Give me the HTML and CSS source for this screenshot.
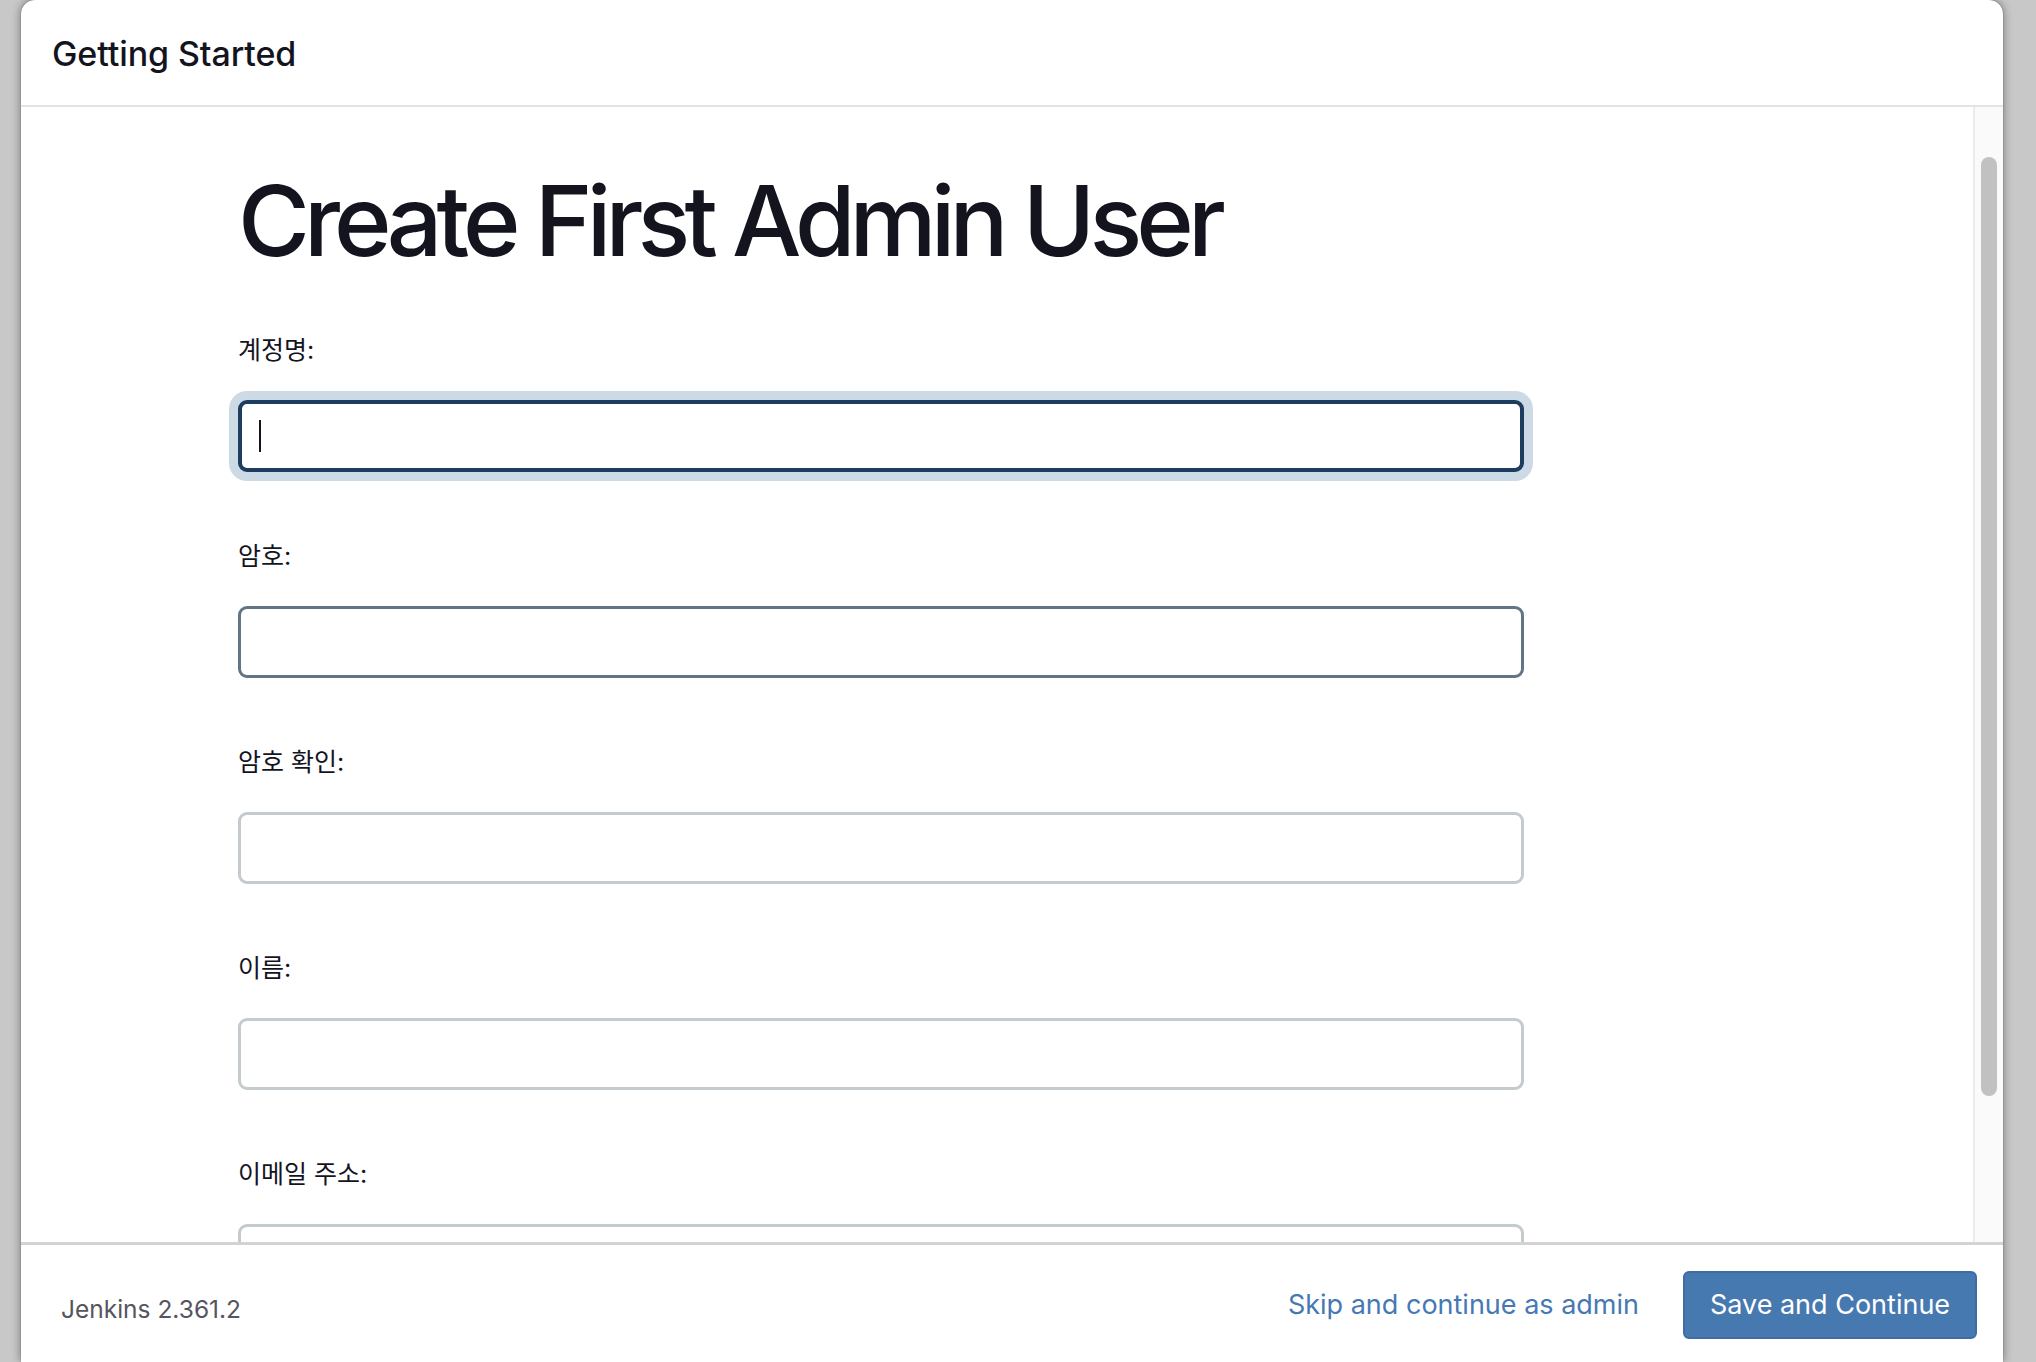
FILE: index.html
```html
<!DOCTYPE html>
<html lang="ko">
<head>
<meta charset="utf-8">
<title>Getting Started</title>
<link rel="stylesheet" href="styles.css">
</head>
<body>
<div class="page">
  <div class="panel">
    <div class="panel-header">
      <h4 class="header-title">Getting Started</h4>
    </div>
    <div class="panel-body">
      <div class="content">
        <h1 class="title">Create First Admin User</h1>
        <div class="field">
          <label class="label">계정명:</label>
          <div class="input input-focus"><span class="caret"></span></div>
        </div>
        <div class="field">
          <label class="label">암호:</label>
          <div class="input input-hover"></div>
        </div>
        <div class="field">
          <label class="label">암호 확인:</label>
          <div class="input"></div>
        </div>
        <div class="field">
          <label class="label">이름:</label>
          <div class="input"></div>
        </div>
        <div class="field">
          <label class="label">이메일 주소:</label>
          <div class="input"></div>
        </div>
      </div>
      <div class="scroll-track"><div class="scroll-thumb"></div></div>
    </div>
    <div class="panel-footer">
      <span class="version">Jenkins 2.361.2</span>
      <div class="actions">
        <a class="skip-link">Skip and continue as admin</a>
        <button class="save-btn">Save and Continue</button>
      </div>
    </div>
  </div>
</div>
</body>
</html>
```
FILE: styles.css
```css
html, body {
  margin: 0;
  padding: 0;
  height: 100%;
}
body {
  background: #c8c8c8;
  font-family: Inter, "Noto Sans CJK KR", sans-serif;
  color: #14141f;
  overflow: hidden;
}
.page {
  height: 1362px;
  padding: 0 33px 0 21px;
  display: flex;
}
.panel {
  flex: 1;
  display: flex;
  flex-direction: column;
  background: #fff;
  border-radius: 14px 14px 0 0;
  box-shadow: 0 0 10px rgba(0, 0, 0, 0.45), 0 0 1px rgba(0, 0, 0, 0.6);
  overflow: hidden;
}
.panel-header {
  border-bottom: 2px solid #e3e3e3;
  display: flex;
  align-items: center;
  padding-left: 31px;
  padding-top: 2px;
  box-sizing: border-box;
  height: 107px;
}
.header-title {
  margin: 0;
  font-size: 34px;
  font-weight: 500;
  color: #14141f;
  letter-spacing: -0.1px;
}
.panel-body {
  flex: 1;
  display: flex;
  min-height: 0;
}
.content {
  flex: 1;
  overflow: hidden;
  padding-left: 217px;
}
.title {
  margin: 61px 0 56px;
  font-size: 98px;
  line-height: 106px;
  font-weight: 500;
  letter-spacing: -5.9px;
  color: #14141f;
}
.field {
  margin-bottom: 64px;
  width: 1286px;
}
.label {
  display: block;
  font-size: 25px;
  line-height: 40px;
  height: 40px;
  margin-bottom: 30px;
  color: #14141f;
}
.input {
  box-sizing: border-box;
  height: 72px;
  border: 3px solid #c3cbcf;
  border-radius: 9px;
  background: #fff;
  position: relative;
}
.input-focus {
  border: 4px solid #1d3d5e;
  box-shadow: 0 0 0 9px #ccdae6;
}
.input-hover {
  border-color: #627585;
}
.caret {
  position: absolute;
  left: 17px;
  top: 16px;
  width: 2px;
  height: 32px;
  background: #14141f;
}
.scroll-track {
  width: 28px;
  border-left: 2px solid #ebebeb;
  background: #fafafa;
  display: flex;
  justify-content: center;
}
.scroll-thumb {
  margin-top: 50px;
  width: 16px;
  height: 939px;
  border-radius: 8px;
  background: #c1c1c1;
}
.panel-footer {
  border-top: 3px solid #d3d3d3;
  display: flex;
  align-items: center;
  justify-content: space-between;
  padding: 2px 26px 0 40px;
  box-sizing: border-box;
  height: 120px;
}
.version {
  font-size: 24.5px;
  color: #55555f;
  padding-top: 8px;
}
.actions {
  display: flex;
  align-items: center;
  gap: 44px;
}
.skip-link {
  font-size: 27px;
  color: #4679b4;
  cursor: pointer;
}
.save-btn {
  box-sizing: border-box;
  width: 294px;
  height: 68px;
  background: #4779b1;
  border: 2px solid #3f6da3;
  border-radius: 6px;
  color: #fff;
  font-family: Inter, sans-serif;
  font-size: 27px;
  padding: 0;
}
```
